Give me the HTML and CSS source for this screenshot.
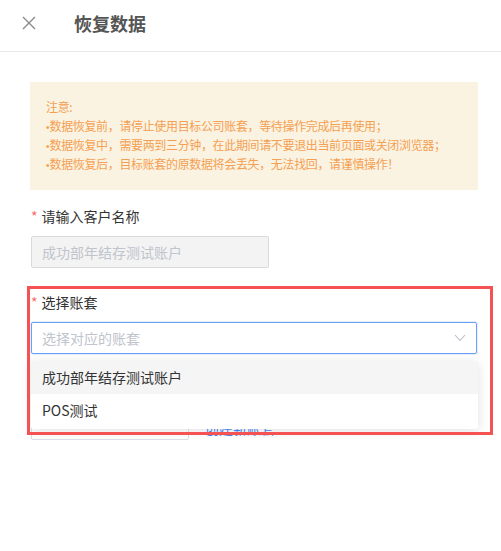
FILE: index.html
```html
<!DOCTYPE html>
<html lang="zh-CN">
<head>
<meta charset="utf-8">
<title>恢复数据</title>
<link rel="stylesheet" href="styles.css">
</head>
<body>
<header class="header">
  <svg class="close" width="14" height="14" viewBox="0 0 14 14"><path d="M1 1L13 13M13 1L1 13" stroke="#8a8a8a" stroke-width="1.4" fill="none"/></svg>
  <h1 class="title">恢复数据</h1>
</header>
<main class="content">
  <div class="notice">
    <p>注意:</p>
    <p><span class="dot">•</span>数据恢复前，请停止使用目标公司账套，等待操作完成后再使用；</p>
    <p><span class="dot">•</span>数据恢复中，需要两到三分钟，在此期间请不要退出当前页面或关闭浏览器；</p>
    <p><span class="dot">•</span>数据恢复后，目标账套的原数据将会丢失，无法找回，请谨慎操作！</p>
  </div>
  <div class="form">
    <div class="item">
      <label class="label"><span class="req">*</span>请输入客户名称</label>
      <div class="input disabled">成功部年结存测试账户</div>
    </div>
    <div class="item">
      <label class="label"><span class="req">*</span>选择账套</label>
      <div class="select-wrap">
        <div class="input select">
          <span class="placeholder">选择对应的账套</span>
          <svg class="chev" width="12" height="8" viewBox="0 0 12 8"><path d="M1 1L6 6.5L11 1" stroke="#b8bcc4" stroke-width="1.1" fill="none"/></svg>
        </div>
        <ul class="dropdown">
          <li class="option hover">成功部年结存测试账户</li>
          <li class="option">POS测试</li>
        </ul>
      </div>
    </div>
    <div class="item">
      <label class="label hidden"><span class="req">*</span>恢复日期</label>
      <div class="row">
        <div class="input small"></div>
        <a class="link">创建新账套</a>
      </div>
    </div>
  </div>
</main>
<div class="annotation"></div>
</body>
</html>
```
FILE: styles.css
```css
* { box-sizing: border-box; }
html, body { margin: 0; padding: 0; }
body {
  position: relative;
  background: #fff;
  font-family: "Noto Sans CJK SC", "Noto Sans", sans-serif;
  color: #333;
  width: 501px;
  height: 551px;
  overflow: hidden;
}
.header {
  display: flex;
  align-items: center;
  height: 52px;
  padding: 0 0 5px 22px;
  border-bottom: 1px solid #e8e8e8;
}
.close { display: block; }
.title {
  margin: 0 0 0 38px;
  font-size: 18px;
  font-weight: 700;
  color: #555;
  line-height: 24px;
}
.content { padding: 30px 23px 0 30px; }
.notice {
  background: #fbf3e1;
  padding: 15px 8px 17px 16px;
  color: #f4a052;
  font-size: 12px;
  line-height: 19px;
  letter-spacing: -0.35px;
  white-space: nowrap;
}
.notice p {
  margin: 0;
  height: 19px;
  overflow: visible;
}
.dot {
  font-family: "Liberation Sans", sans-serif;
  font-size: 10px;
  line-height: 10px;
  letter-spacing: 0;
}
.form { padding-left: 1px; }
.item { margin-top: 24px; }
.item:first-child { margin-top: 16px; }
.label {
  display: block;
  height: 20px;
  font-size: 14px;
  line-height: 20px;
  color: #333;
}
.label.hidden { visibility: hidden; }
.req { color: #f56c6c; margin-right: 4px; }
.input {
  margin-top: 10px;
  height: 32px;
  border: 1px solid #dcdfe6;
  border-radius: 2px;
  padding: 0 10px;
  font-size: 14px;
  line-height: 30px;
  color: #c0c4cc;
}
.input.disabled {
  width: 238px;
  background: #f3f3f3;
  border-color: #dadada;
}
.select-wrap { position: relative; }
.select {
  display: flex;
  align-items: center;
  justify-content: space-between;
  width: 446px;
  border-color: #6aa0f5;
  box-shadow: 0 0 0 1px rgba(106, 160, 245, 0.18);
  padding-right: 10px;
}
.placeholder { color: #c0c4cc; }
.dropdown {
  position: absolute;
  left: 0;
  top: 39px;
  width: 447px;
  margin: 0;
  padding: 0 0 2px;
  list-style: none;
  background: #fff;
  border-radius: 2px;
  box-shadow: 0 2px 12px rgba(0, 0, 0, 0.12);
  z-index: 5;
}
.option {
  height: 33px;
  line-height: 33px;
  padding-left: 11px;
  font-size: 14px;
  color: #333;
}
.option.hover { background: #f5f5f5; }
.row {
  display: flex;
  align-items: flex-end;
  gap: 16px;
}
.input.small { width: 158px; }
.link {
  color: #4a8af4;
  font-size: 14px;
  line-height: 20px;
  margin-bottom: 2px;
}
.annotation {
  position: absolute;
  left: 27px;
  top: 286px;
  width: 466px;
  height: 149px;
  border: 3.5px solid #f55353;
  z-index: 10;
}
```
